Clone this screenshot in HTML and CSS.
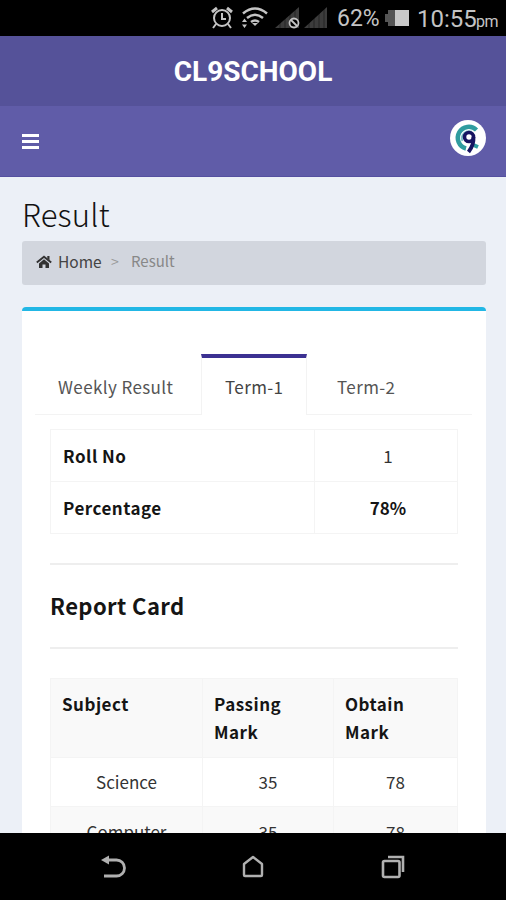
FILE: index.html
```html
<!DOCTYPE html>
<html lang="en">
<head>
<meta charset="utf-8">
<title>CL9SCHOOL</title>
<link rel="stylesheet" href="styles.css">
</head>
<body>
<div class="status">
  <svg class="status-icons" width="118" height="36" viewBox="0 0 118 36" fill="none">
    <g stroke="#c4c4c4" stroke-width="2">
      <circle cx="12" cy="18" r="8"/>
      <path d="M12 13v6h4M6 24l-3 4M18 24l3 4"/>
      <path d="M2 12l5-4M17 8l5 4" stroke-width="3"/>
    </g>
    <g stroke="#c4c4c4" stroke-width="2.500">
      <path d="M33 13.500q12-10 24 0M37 18q8-6.500 16 0M41 22q4-3 8 0"/>
      <path d="M45 26l-3-3h6z" fill="#c4c4c4" stroke="none"/>
      <path d="M34.500 18.500l2.500 3.500h-5zM34.500 28l2.500-3.500h-5z" fill="#c4c4c4" stroke="none"/>
    </g>
    <path d="M65 28L89 7v21zM94 28l23-21v21z" fill="#3c3c3c"/>
    <path d="M70 8v20M75 8v20M80 8v20M85 8v20M99 8v20M104 8v20M109 8v20M114 8v20" stroke="#000" stroke-opacity=".4"/>
    <circle cx="84" cy="23" r="4.500" fill="#000" stroke="#c4c4c4" stroke-width="1.800"/>
    <path d="M81 20l6 6" stroke="#c4c4c4" stroke-width="1.800"/>
  </svg>
  <span class="battery-text">62%</span>
  <svg class="battery" width="24" height="18" viewBox="0 0 24 18"><path d="M0 5h3V1h7v16H3v-4H0z" fill="#555"/><path d="M10 1h14v16H10z" fill="#c9c9c9"/></svg>
  <span class="clock">10:55</span><span class="pm">pm</span>
</div>
<header class="brand"><span>CL9SCHOOL</span></header>
<nav class="navbar">
  <div class="menu"><i></i><i></i><i></i></div>
  <svg class="avatar" width="36" height="36" viewBox="0 0 36 36" fill="none">
    <circle cx="18" cy="18" r="18" fill="#fff"/>
    <path d="M26.500 10A11 11 0 1 0 16 28.500" stroke="#2f9c9f" stroke-width="4.500"/>
    <path d="M22 12A7 7 0 0 0 12.500 21" stroke="#82c3c5" stroke-width="2"/>
    <path d="M23.500 25l4.500 2" stroke="#2f9c9f" stroke-width="4"/>
    <circle cx="19" cy="17" r="4.500" stroke="#171461" stroke-width="3.600" fill="#fff"/>
    <path d="M23.500 17q.5 8-5 15" stroke="#171461" stroke-width="3.800"/>
  </svg>
</nav>
<main class="content">
  <h1>Result</h1>
  <div class="crumbs">
    <svg width="16" height="14" viewBox="0 0 16 14"><path d="M8 4.200l5 4.200V13H9.500V9.500h-3V13H3V8.400z" fill="#333"/><path d="M.8 7.600L8 1.700l7.200 5.900" fill="none" stroke="#333" stroke-width="1.900"/><path d="M11.300 1h2.200v4.200l-2.200-1.800z" fill="#333"/></svg>
    <span class="home">Home</span><span class="sep">&gt;</span><span class="here">Result</span>
  </div>
  <section class="box">
    <div class="tabs">
      <div class="tab weekly">Weekly Result</div>
      <div class="tab active">Term-1</div>
      <div class="tab last">Term-2</div>
    </div>
    <div class="pane">
      <table class="summary">
        <tr><th>Roll No</th><td>1</td></tr>
        <tr><th>Percentage</th><td class="strong">78%</td></tr>
      </table>
      <h2>Report Card</h2>
      <table class="marks">
        <tr class="head"><th class="subject">Subject</th><th class="passing">Passing<br>Mark</th><th>Obtain<br>Mark</th></tr>
        <tr><td>Science</td><td>35</td><td>78</td></tr>
        <tr class="odd"><td>Computer</td><td>35</td><td>78</td></tr>
      </table>
    </div>
  </section>
</main>
<footer class="keys">
  <svg width="28" height="28" viewBox="0 0 28 28" fill="none" stroke="#b0b0b0" stroke-width="2.800"><path d="M8 7h9.500a8 8 0 0 1 0 16H5"/><path d="M2 7l8-4.500v9z" fill="#b0b0b0" stroke="none"/></svg>
  <svg width="28" height="28" viewBox="0 0 28 28" fill="none" stroke="#b0b0b0" stroke-width="2.400" stroke-linejoin="round"><path d="M5 11l9-7 9 7v11q0 1-1 1H6q-1 0-1-1z"/></svg>
  <svg width="28" height="28" viewBox="0 0 28 28" fill="none" stroke="#b0b0b0" stroke-width="2.600"><rect x="4" y="8" width="16.500" height="16" rx="1.500"/><path d="M9 4h15v15"/></svg>
</footer>
</body>
</html>
```
FILE: styles.css
```css
* { box-sizing: border-box; }
body {
  margin: 0;
  height: 900px;
  overflow: hidden;
  display: flex;
  flex-direction: column;
  background: #ecf0f7;
  color: #333;
  font-family: "Noto Sans CJK SC", "Noto Sans", sans-serif;
  font-size: 17px;
  line-height: 28px;
}
.status {
  flex: none;
  height: 36px;
  background: #000;
  color: #c4c4c4;
  display: flex;
  align-items: center;
  padding: 2px 0 0 210px;
  font-family: Roboto, sans-serif;
  font-size: 24px;
  white-space: nowrap;
}
.status-icons { margin-top: -2px; }
.battery-text { width: 42px; margin-left: 9px; font-size: 23px; }
.battery { margin: -2px 0 0 6px; }
.clock { margin-left: 8px; width: 55px; }
.pm { margin-left: 4px; font-size: 16px; letter-spacing: -.6px; padding-top: 5px; }
.brand {
  flex: none;
  height: 70px;
  background: #555299;
  color: #fff;
  display: flex;
  align-items: center;
  justify-content: center;
  font: 700 28px Roboto, sans-serif;
}
.navbar {
  flex: none;
  height: 71px;
  background: #605ca8;
  border-bottom: 1px solid #5550a0;
  display: flex;
  justify-content: space-between;
  padding: 14px 20px 0 22px;
}
.menu { padding-top: 14px; width: 17px; }
.menu i { display: block; height: 3px; background: #fff; margin-bottom: 3px; }
.content {
  flex: none;
  height: 656px;
  overflow: hidden;
  padding: 20px 20px 0 22px;
}
h1 {
  margin: 0;
  height: 44px;
  font-weight: 300;
  font-size: 31px;
  line-height: 34px;
  color: #111;
  letter-spacing: .2px;
}
.crumbs {
  height: 44px;
  background: #d2d6de;
  border-radius: 3px;
  display: flex;
  align-items: center;
  padding: 0 0 4px 14px;
  font-size: 15.5px;
}
.crumbs svg { margin-top: 2px; }
.home { margin-left: 6px; color: #444; width: 44px; }
.sep { margin-left: 9px; width: 10px; color: #999; font-size: 14px; }
.here { margin-left: 10px; color: #888; font-size: 15px; }
.box {
  margin-top: 22px;
  height: 600px;
  border-top: 4px solid #22b7e5;
  border-radius: 4px;
  background: #fff;
  padding: 43px 14px 0 13px;
}
.tabs {
  display: flex;
  height: 61px;
  border-bottom: 1px solid #f3f3f3;
  letter-spacing: .4px;
}
.tab { padding-top: 19px; color: #555; white-space: nowrap; }
.weekly { width: 166px; padding-left: 23px; }
.active {
  width: 106px;
  height: 61px;
  padding: 15px 0 0 23px;
  border: 1px solid #f3f3f3;
  border-top: 4px solid #3c3192;
  border-bottom: 0;
  background: #fff;
  color: #444;
}
.last { padding-left: 30px; }
.pane { padding: 14px 14px 0 15px; }
table { width: 408px; border-collapse: collapse; table-layout: fixed; }
th, td {
  border: 1px solid #f4f4f4;
  padding: 12px 11px 11px;
  text-align: center;
  font-weight: 400;
}
th { text-align: left; vertical-align: top; font-weight: 700; color: #151515; letter-spacing: .5px; }
.summary th { width: 264px; padding-left: 12px; }
.summary td { padding-left: 15px; }
.strong { font-weight: 700; color: #151515; }
h2 {
  margin: 29px 0;
  height: 86px;
  border: solid #eee;
  border-width: 2px 0;
  font-size: 22px;
  line-height: 80px;
  color: #151515;
  letter-spacing: .4px;
}
.head, .odd { background: #f9f9f9; }
.head th { height: 79px; padding-top: 11px; }
.subject { width: 152px; }
.passing { width: 131px; }
.marks td { padding: 10px 11px; }
.marks .odd td { padding-top: 11px; }
.keys {
  flex: none;
  height: 67px;
  background: #000;
  display: flex;
  justify-content: space-between;
  padding: 20px 99px 0;
}
```
